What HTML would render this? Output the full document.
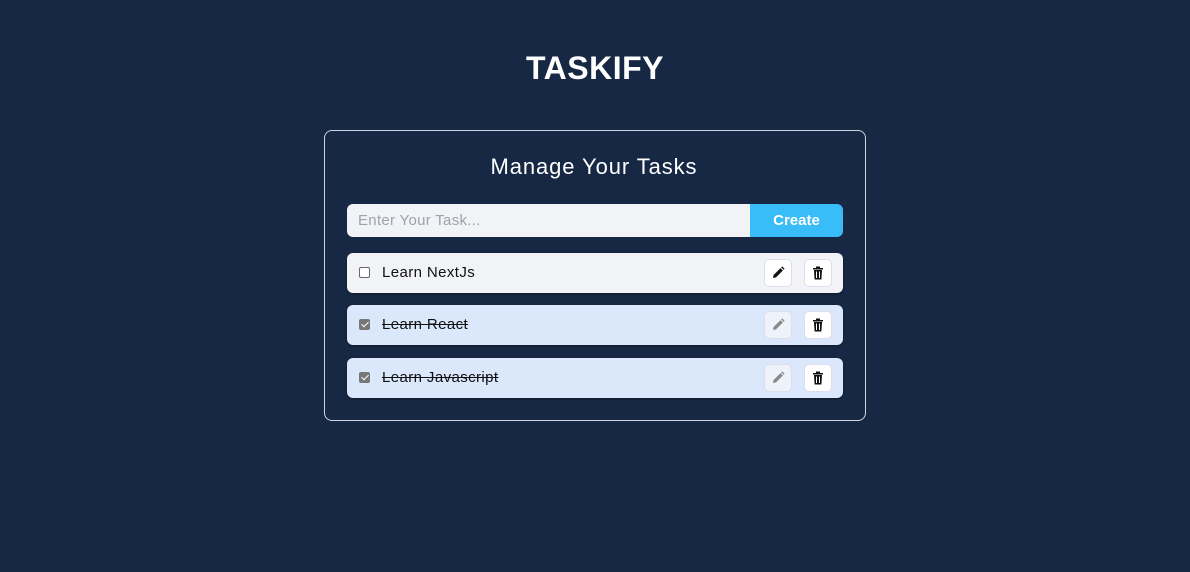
<!DOCTYPE html>
<html><head><style>
body{margin:0;width:1190px;height:572px;background:#172844;font-family:"Liberation Sans",sans-serif;position:relative;overflow:hidden}
h1{position:absolute;top:50px;left:0;width:100%;text-align:center;margin:0;color:#fff;font-size:32px;font-weight:bold;letter-spacing:0.5px}
.card{position:absolute;left:324px;top:130px;width:540px;height:289px;border:1px solid #d0d4dc;border-radius:8px;box-sizing:content-box}
.card h2{position:absolute;left:0;width:100%;text-align:center;margin:0;color:#fff;font-size:22px;font-weight:normal;letter-spacing:0.9px}
.inp{position:absolute;left:347px;top:204px;width:403px;height:33px;background:#f1f3f6;border-radius:6px 0 0 6px;color:#9ca3af;font-size:15px;line-height:33px;padding-left:11px;box-sizing:border-box;letter-spacing:0.3px}
.btn{position:absolute;left:750px;top:204px;width:93px;height:33px;background:#38bdf8;border-radius:0 6px 6px 0;color:#fff;font-size:15px;font-weight:bold;line-height:33px;text-align:center}
.row{position:absolute;left:347px;width:496px;height:40px;border-radius:6px;box-shadow:0 1px 2px rgba(0,0,0,.4)}
.cb{position:absolute;left:12px;top:14px;width:11px;height:11px;border:1px solid #666;border-radius:2px;background:#fff;box-sizing:border-box}
.cb.on{background:#777;border-color:#777}
.cb.on:after{content:"";position:absolute;left:3px;top:0px;width:3px;height:6px;border:solid #fff;border-width:0 1.5px 1.5px 0;transform:rotate(45deg)}
.t{position:absolute;left:35px;top:0;line-height:40px;font-size:15px;color:#111;letter-spacing:0.4px}
.t.s{text-decoration:line-through}
.ib{position:absolute;top:6px;width:28px;height:28px;background:#fff;border:1px solid #dde;border-radius:5px;box-sizing:border-box;display:flex;align-items:center;justify-content:center}
.ib.dis{background:#eef2fa}
</style></head><body>
<h1>TASKIFY</h1>
<div class="card"></div>
<div class="card" style="border:none"><h2 style="top:24px">Manage Your Tasks</h2></div>
<div class="inp">Enter Your Task...</div>
<div class="btn">Create</div>

<div class="row" style="top:253px;background:#f1f3f7"><div class="cb"></div><div class="t">Learn NextJs</div>
<div class="ib" style="left:417px"><svg width="14" height="14" viewBox="0 0 14 14"><path d="M2 12l.6-3L9.5 2.1l2.4 2.4L5 11.4z M10.2 1.4l1-1 2.4 2.4-1 1z" fill="#111"/></svg></div>
<div class="ib" style="left:457px"><svg width="12" height="14" viewBox="0 0 12 14"><path d="M1 2h10v1.5H1z M4 .5h4v1.5H4z M2 4h8l-.6 9.5H2.6z" fill="#111"/><path d="M4.5 5.5v6.5M7.5 5.5v6.5" stroke="#fff" stroke-width="1"/></svg></div></div>

<div class="row" style="top:305px;background:#dbe8fc"><div class="cb on"></div><div class="t s">Learn React</div>
<div class="ib dis" style="left:417px"><svg width="14" height="14" viewBox="0 0 14 14"><path d="M2 12l.6-3L9.5 2.1l2.4 2.4L5 11.4z M10.2 1.4l1-1 2.4 2.4-1 1z" fill="#888"/></svg></div>
<div class="ib" style="left:457px"><svg width="12" height="14" viewBox="0 0 12 14"><path d="M1 2h10v1.5H1z M4 .5h4v1.5H4z M2 4h8l-.6 9.5H2.6z" fill="#111"/><path d="M4.5 5.5v6.5M7.5 5.5v6.5" stroke="#fff" stroke-width="1"/></svg></div></div>

<div class="row" style="top:358px;background:#dbe8fc"><div class="cb on"></div><div class="t s">Learn Javascript</div>
<div class="ib dis" style="left:417px"><svg width="14" height="14" viewBox="0 0 14 14"><path d="M2 12l.6-3L9.5 2.1l2.4 2.4L5 11.4z M10.2 1.4l1-1 2.4 2.4-1 1z" fill="#888"/></svg></div>
<div class="ib" style="left:457px"><svg width="12" height="14" viewBox="0 0 12 14"><path d="M1 2h10v1.5H1z M4 .5h4v1.5H4z M2 4h8l-.6 9.5H2.6z" fill="#111"/><path d="M4.5 5.5v6.5M7.5 5.5v6.5" stroke="#fff" stroke-width="1"/></svg></div></div>
</body></html>
